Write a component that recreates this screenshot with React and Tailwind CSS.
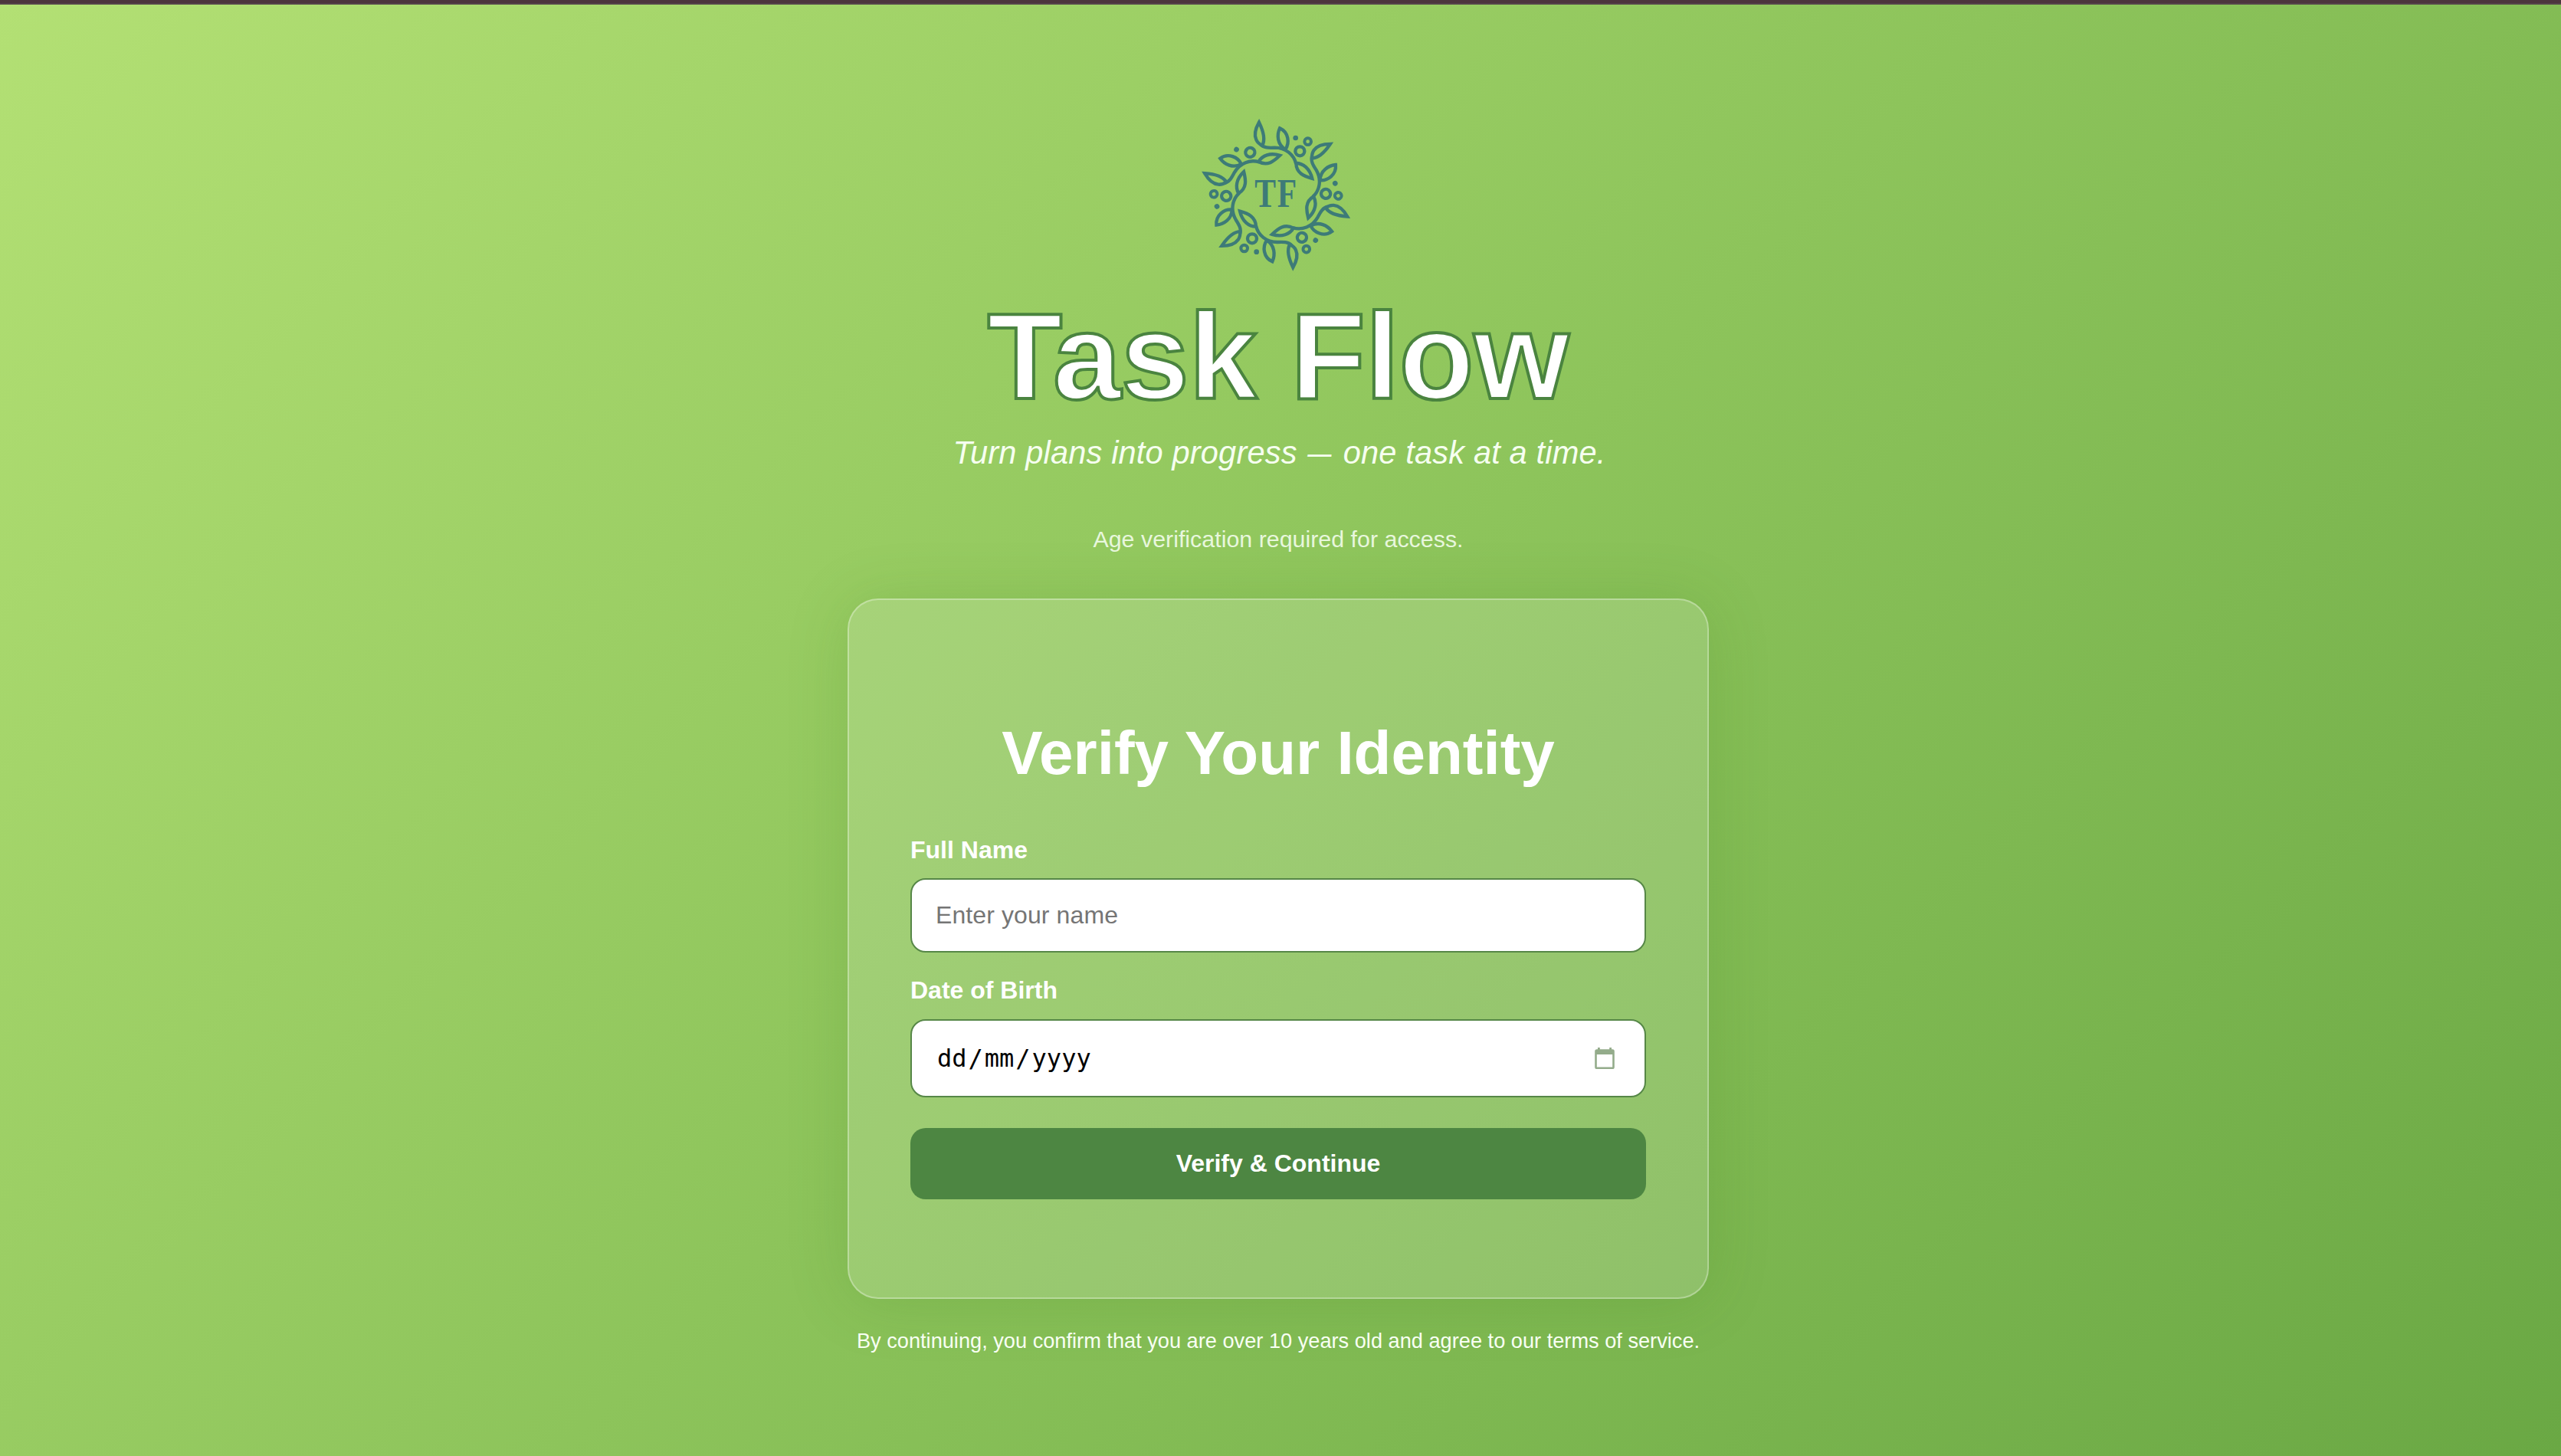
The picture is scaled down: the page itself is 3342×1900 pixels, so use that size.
import React from "react";

const TURNS = [0, 60, 120, 180, 240, 300];
const BERRY_TURNS = [0, 60, 120, 180, 240];

function Wreath() {
  return (
    <svg className="block h-[230px] w-[230px]" viewBox="0 0 690 690" aria-label="TF">
      <g fill="none" stroke="#3d7b78" strokeWidth="13" strokeMiterlimit="8">
        {TURNS.map((a) => (
          <g key={a} transform={`rotate(${a} 345.5 343)`}>
            <path d="M279 59C267 80 259 108 268 127C273 138 282 145 292 149C302 130 300 102 279 59Z" />
            <path d="M360 82C348 108 350 146 382 165C399 141 396 98 360 82Z" />
            <path d="M284 144C296 160 318 159 340 158C384 158 416 186 424 222" />
            <path d="M424 219C452 219 478 240 487 279C455 270 425 258 424 219Z" />
          </g>
        ))}
        {BERRY_TURNS.map((a) => (
          <g key={a} transform={`rotate(${a} 345.5 343)`}>
            <circle cx="470" cy="134" r="13" strokeWidth="12" />
          </g>
        ))}
        {TURNS.map((a) => (
          <g key={a} transform={`rotate(${a} 345.5 343)`}>
            <circle cx="439" cy="172" r="18" />
            <circle cx="422" cy="120" r="10" fill="#3d7b78" stroke="none" />
          </g>
        ))}
      </g>
      <g fill="#3d7b78" fontFamily="'Liberation Serif', serif" fontWeight="700" fontSize="156">
        <text x="0" y="0" transform="translate(262 390) scale(0.8 1)">T</text>
        <text x="0" y="0" transform="translate(350 390) scale(0.8 1)">F</text>
      </g>
    </svg>
  );
}

function CalendarIcon() {
  return (
    <svg className="block h-[28px] w-[26px]" viewBox="0 0 26 28" fill="#94ac8b">
      <path
        fillRule="evenodd"
        d="M4 0h2.8v2.2h12.4V0H22v2.2h1.2A2.6 2.6 0 0 1 25.8 4.8v20.6A2.6 2.6 0 0 1 23.2 28H2.8A2.6 2.6 0 0 1 .2 25.4V4.8A2.6 2.6 0 0 1 2.8 2.2H4ZM2.8 9v16.4h20.4V9Z"
      />
    </svg>
  );
}

export default function App() {
  return (
    <div className="flex h-[1900px] w-full flex-col bg-[linear-gradient(135deg,#b3e074_0%,#8dc45b_50%,#6aa844_100%)] font-['Liberation_Sans',Arial,sans-serif]">
      <div className="h-[6px] w-full shrink-0 border-b-2 border-[#55424a] bg-[#4c353d]" />
      <main className="flex flex-col items-center pr-[6px] whitespace-nowrap">
        <div className="mt-[134px] -ml-[6px]">
          <Wreath />
        </div>
        <h1 className="mt-[15px] text-[160px] leading-[160px] font-bold tracking-[-0.3px] text-white [-webkit-text-stroke:4px_#4a843f]">
          Task Flow
        </h1>
        <p className="mt-[22px] pl-[3px] text-[41.6px] leading-[48px] tracking-[0.15px] text-[#f6fff0] italic">
          Turn plans into progress <span className="mr-[-2px] ml-[-3px] inline-block scale-x-75">—</span> one task at a time.
        </p>
        <p className="mt-[68px] text-[30.4px] leading-[40px] text-[#e8f7dd]">
          Age verification required for access.
        </p>
        <form className="mt-[58px] flex h-[914px] w-[1124px] flex-col rounded-[40px] border-2 border-white/30 bg-white/15 px-[78px] shadow-[0_4px_80px_rgba(60,120,30,0.18)]">
          <h2 className="mt-[150px] text-center text-[80px] leading-[100px] font-bold text-white">
            Verify Your Identity
          </h2>
          <label className="mx-[2px] mt-[54px] text-[32px] leading-[44px] font-bold text-white">Full Name</label>
          <div className="mx-[2px] mt-[15px] flex h-[97px] items-center rounded-[20px] border-2 border-[#568747] bg-white px-[31px] text-[32px] leading-[37px] tracking-[0.1px] text-[#757575]">
            Enter your name
          </div>
          <label className="mx-[2px] mt-[27px] text-[32px] leading-[44px] font-bold text-white">Date of Birth</label>
          <div className="mx-[2px] mt-[16px] flex h-[102px] items-center justify-between rounded-[20px] border-2 border-[#568747] bg-white pr-[39px] pl-[33px] text-black">
            <div className="flex font-['DejaVu_Sans_Mono',monospace] text-[32px] leading-[40px]">
              <span className="mr-[2px]">dd</span>
              <span className="mr-[2px]">/</span>
              <span className="mr-[2px]">mm</span>
              <span className="mr-[2px]">/</span>
              <span>yyyy</span>
            </div>
            <CalendarIcon />
          </div>
          <button
            type="button"
            className="mx-[2px] mt-[40px] h-[93px] rounded-[20px] bg-[#4d8642] text-[32px] leading-[37px] font-bold text-white"
          >
            Verify &amp; Continue
          </button>
        </form>
        <p className="mt-[35px] text-[27.2px] leading-[40px] text-[#f8fff3]">
          By continuing, you confirm that you are over 10 years old and agree to our terms of service.
        </p>
      </main>
    </div>
  );
}
